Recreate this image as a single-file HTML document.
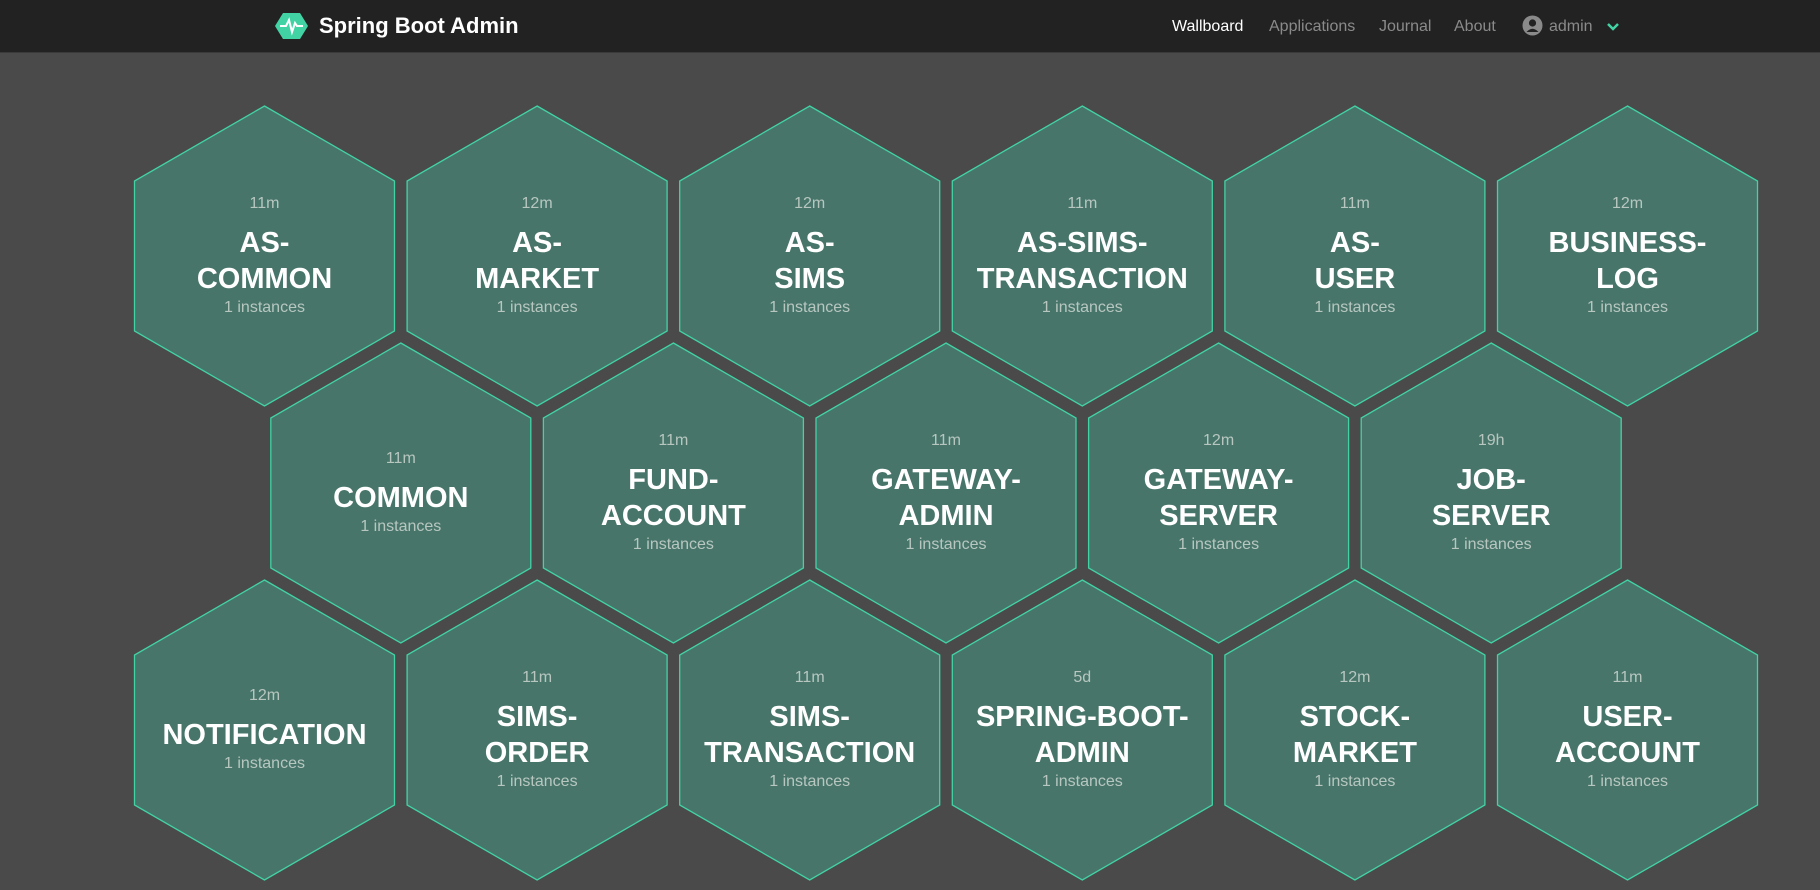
<!DOCTYPE html>
<html><head><meta charset="utf-8"><style>
body{margin:0;width:1820px;height:890px;background:#4a4a4a;font-family:"Liberation Sans",sans-serif;overflow:hidden;position:relative}
.hdr{position:absolute;left:0;top:0;width:1820px;height:52px;background:#222;border-bottom:1px solid #3a3a3a}
.brand{position:absolute;left:319px;top:13px;color:#fff;font-size:22px;font-weight:bold}
.nav{position:absolute;top:18px;font-size:16px;color:#8a8a8a}
svg.hex{position:absolute;left:0;top:0}
.t{position:absolute;width:260px;height:300px;display:flex;flex-direction:column;align-items:center;justify-content:center;text-align:center}
.t .a{color:#b7c7c0;font-size:16px;margin-bottom:12px}
.t .n{color:#fff;font-size:29px;font-weight:bold;line-height:36px}
.t .i{color:#b7c7c0;font-size:16px;margin-top:2px}
</style></head><body>
<div class="hdr">
<svg style="position:absolute;left:275px;top:12px" width="33" height="28" viewBox="0 0 33 28"><polygon points="8,1 25,1 33,14 25,27 8,27 0,14" fill="#42d3a5"/><polyline points="5,14 11,14 14,8 17,20 20,11 22,14 28,14" fill="none" stroke="#fff" stroke-width="2"/></svg>
<div class="brand">Spring Boot Admin</div>
<div class="nav" style="left:1172px;color:#fff">Wallboard</div>
<div class="nav" style="left:1269px">Applications</div>
<div class="nav" style="left:1379px">Journal</div>
<div class="nav" style="left:1454px">About</div>
<svg style="position:absolute;left:1522px;top:15px" width="21" height="21" viewBox="0 0 21 21"><circle cx="10.5" cy="10.5" r="10" fill="#8a8a8a"/><circle cx="10.5" cy="8" r="3.6" fill="#222"/><path d="M4.5 17 Q10.5 10.5 16.5 17" fill="#222"/></svg>
<div class="nav" style="left:1549px">admin</div>
<svg style="position:absolute;left:1606px;top:22px" width="14" height="10" viewBox="0 0 14 10"><polyline points="2,2 7,7 12,2" fill="none" stroke="#42d3a5" stroke-width="2.5"/></svg>
</div>
<svg class="hex" width="1820" height="890" id="s"></svg>
<div id="c"></div>
<script>
var rows=[[["11m","AS-<br>COMMON"],["12m","AS-<br>MARKET"],["12m","AS-<br>SIMS"],["11m","AS-SIMS-<br>TRANSACTION"],["11m","AS-<br>USER"],["12m","BUSINESS-<br>LOG"]],
[["11m","COMMON"],["11m","FUND-<br>ACCOUNT"],["11m","GATEWAY-<br>ADMIN"],["12m","GATEWAY-<br>SERVER"],["19h","JOB-<br>SERVER"]],
[["12m","NOTIFICATION"],["11m","SIMS-<br>ORDER"],["11m","SIMS-<br>TRANSACTION"],["5d","SPRING-BOOT-<br>ADMIN"],["12m","STOCK-<br>MARKET"],["11m","USER-<br>ACCOUNT"]]];
var s="",h="";
rows.forEach(function(r,ri){r.forEach(function(d,ci){
var cx=264.5+272.6*ci+(ri==1?136.3:0),cy=256+237*ri;
var p=[[cx,cy-150],[cx+130,cy-75],[cx+130,cy+75],[cx,cy+150],[cx-130,cy+75],[cx-130,cy-75]].map(function(q){return q.join(",")}).join(" ");
s+='<polygon points="'+p+'" fill="#48756a" stroke="#42d3a5" stroke-width="1.3"/>';
h+='<div class="t" style="left:'+(cx-130)+'px;top:'+(cy-150)+'px"><div class="a">'+d[0]+'</div><div class="n">'+d[1]+'</div><div class="i">1 instances</div></div>';
})});
document.getElementById("s").innerHTML=s;document.getElementById("c").innerHTML=h;
</script>
</body></html>
